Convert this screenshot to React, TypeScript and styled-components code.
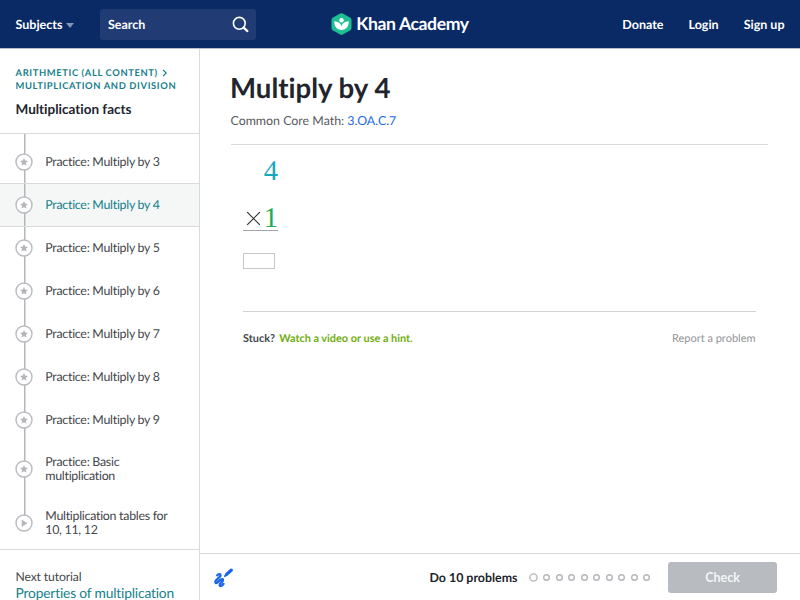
import React from "react";
import styled, { createGlobalStyle, css } from "styled-components";

const GlobalStyle = createGlobalStyle`
  * { box-sizing: border-box; }
  html, body { margin: 0; padding: 0; background: #fff; }
  body {
    font-family: Lato, "Open Sans", sans-serif;
    font-variant-ligatures: none;
    text-rendering: geometricPrecision;
    color: #21242c;
    overflow: hidden;
  }
  a { color: inherit; text-decoration: none; }
  h1, h2, p, ol { margin: 0; padding: 0; }
`;

const Page = styled.div`
  display: flex;
  flex-direction: column;
  width: 800px;
  height: 600px;
  overflow: hidden;
`;

const TopBar = styled.header`
  display: grid;
  grid-template-columns: 1fr auto 1fr;
  align-items: center;
  flex: none;
  height: 49px;
  padding: 0 15.5px 1px 15.5px;
  background: #0a2a66;
  border-bottom: 1px solid #b9bfd0;
  color: #fff;
  font-size: 12.5px;
  font-weight: 700;
`;

const NavLeft = styled.div`
  display: flex;
  align-items: center;
`;

const Subjects = styled.a`
  display: flex;
  align-items: center;
  gap: 4px;
  width: 84.5px;
  padding-top: 1px;
  white-space: nowrap;
  svg { margin-top: 3px; }
`;

const SearchBox = styled.div`
  display: flex;
  align-items: center;
  justify-content: space-between;
  width: 156px;
  height: 31px;
  margin-top: 1px;
  padding: 0 7px 0 8px;
  border-radius: 3px;
  background: #213c74;
`;

const Brand = styled.a`
  display: flex;
  align-items: center;
  gap: 4px;
  font-size: 17.6px;
  letter-spacing: -0.4px;
  line-height: 24px;
  white-space: nowrap;
  margin-top: 1px;
`;

const NavRight = styled.nav`
  display: flex;
  justify-content: flex-end;
  gap: 25px;
  padding-top: 1px;
`;

const Body = styled.div`
  display: flex;
  flex: 1;
  min-height: 0;
`;

const Sidebar = styled.aside`
  flex: none;
  width: 200px;
  border-right: 1px solid #d9dadc;
  overflow: hidden;
`;

const TopicHeader = styled.div`
  height: 85px;
  padding: 19px 0 0 15.5px;
  border-bottom: 1px solid #d9dadc;
`;

const Crumbs = styled.div`
  color: #14808a;
  font-size: 9.4px;
  font-weight: 700;
  line-height: 12.5px;
  letter-spacing: 0.62px;
  white-space: nowrap;
  svg { margin-left: 4px; vertical-align: -1px; }
`;

const TopicTitle = styled.h2`
  margin-top: 7px;
  font-size: 13.5px;
  line-height: 18px;
  font-weight: 700;
`;

const Lessons = styled.ol`
  list-style: none;
  padding-top: 6.5px;
  height: 416px;
  border-bottom: 1px solid #d9dadc;
  background: linear-gradient(#b4b6ba, #b4b6ba) 23.5px 0 / 1.5px 382px no-repeat;
`;

const Lesson = styled.li<{ $active?: boolean; $tall?: boolean }>`
  display: flex;
  align-items: center;
  gap: 12px;
  height: ${(p) => (p.$tall ? 54 : 43)}px;
  padding-left: 15.3px;
  color: #45474b;
  font-size: 12.4px;
  letter-spacing: -0.28px;
  line-height: 14px;
  ${(p) =>
    !p.$tall &&
    css`
      padding-top: 0.6px;
    `}
  ${(p) =>
    p.$active &&
    css`
      height: 44px;
      margin-top: -0.5px;
      margin-bottom: -0.5px;
      color: #14808a;
      background: linear-gradient(#b4b6ba, #b4b6ba) 23.5px 0 / 1.5px 100% no-repeat, #f5f7f7;
      border-top: 1px solid #d9dadc;
      border-bottom: 1px solid #d9dadc;
    `}
  svg { flex: none; }
`;

const NextUp = styled.div`
  padding: 19px 0 0 15.5px;
  color: #45474b;
  font-size: 12.2px;
  letter-spacing: -0.14px;
  line-height: 15px;
  white-space: nowrap;
  a {
    display: block;
    color: #14808a;
    font-size: 13.8px;
    letter-spacing: -0.18px;
    line-height: 18px;
  }
`;

const Main = styled.main`
  display: flex;
  flex-direction: column;
  flex: 1;
  min-width: 0;
`;

const Content = styled.section`
  flex: 1;
  padding: 21px 32px 0 30.5px;
`;

const Title = styled.h1`
  margin-left: -0.5px;
  font-size: 27.6px;
  line-height: 36px;
  font-weight: 700;
`;

const Standard = styled.p`
  margin-top: 6px;
  padding-bottom: 14px;
  border-bottom: 1px solid #d9dadc;
  color: #5a5c60;
  font-size: 12.4px;
  line-height: 18px;
  a { color: #1b66e8; }
`;

const Exercise = styled.div`
  margin: 0 12.5px;
  height: 167px;
  border-bottom: 1px solid #d0d2d4;
`;

const Sum = styled.div`
  display: flex;
  flex-direction: column;
  align-items: flex-end;
  width: 35px;
  padding-top: 11px;
  font-family: "Liberation Serif", serif;
  font-size: 28.5px;
  line-height: 32px;
`;

const Factor = styled.span`
  color: #14a8bd;
`;

const TimesRow = styled.div`
  display: flex;
  align-items: center;
  justify-content: space-between;
  width: 35px;
  height: 32px;
  margin-top: 11px;
  padding-left: 3px;
  padding-top: 8px;
  border-bottom: 1px solid #a2a4a8;
  color: #1fab54;
`;

const Answer = styled.input`
  display: block;
  width: 31.5px;
  height: 16px;
  margin-top: 22px;
  padding: 0 4px;
  border: 1px solid #c4c6ca;
  background: #fff;
  outline: none;
`;

const Help = styled.div`
  display: flex;
  justify-content: space-between;
  margin: 18px 12.5px 0;
  font-size: 11px;
  line-height: 17px;
  color: #45474b;
`;

const Stuck = styled.div`
  font-weight: 700;
  font-size: 10.9px;
  a { margin-left: 1.5px; color: #71ae12; }
`;

const Report = styled.a`
  && { color: #919397; }
`;

const TaskBar = styled.footer`
  display: flex;
  align-items: center;
  flex: none;
  height: 47px;
  padding: 1px 23px 0 13px;
  border-top: 1px solid #d9dadc;
`;

const Goal = styled.span`
  margin-left: auto;
  margin-right: 11px;
  font-size: 12.4px;
  font-weight: 700;
`;

const Dots = styled.div`
  display: flex;
  align-items: center;
  gap: 5.5px;
  margin-right: 18px;
`;

const Dot = styled.svg.attrs({ viewBox: "0 0 10 10" })<{ $current?: boolean }>`
  width: ${(p) => (p.$current ? 9 : 7)}px;
  height: ${(p) => (p.$current ? 9 : 7)}px;
  overflow: visible;
  fill: none;
  stroke: #b4b6ba;
  stroke-width: ${(p) => (p.$current ? 1.5 : 2)};
`;

const CheckButton = styled.button`
  width: 109px;
  height: 31px;
  padding: 0;
  border: 0;
  border-radius: 3px;
  background: #b8bbc0;
  color: #f4f5f6;
  font: 700 12.5px Lato, sans-serif;
`;

const LessonIcon = ({ video }: { video?: boolean }) => (
  <svg width="18" height="18" viewBox="0 0 18 18">
    <circle cx="9" cy="9" r="8" fill="#fff" stroke="#b9bbbf" strokeWidth="1.4" />
    {video ? (
      <path d="M7 6v6.4L12.1 9.2z" fill="#b4b6ba" stroke="#b4b6ba" strokeWidth=".5" strokeLinejoin="round" />
    ) : (
      <path d="M9 5l1.2 2.6 2.8.3-2.1 1.9.6 2.8L9 11.2l-2.5 1.4.6-2.8L5 7.9l2.8-.3z" fill="#b4b6ba" />
    )}
  </svg>
);

const BrandMark = () => (
  <svg width="21" height="22" viewBox="0 0 21 22">
    <path
      d="M9.2.5Q10.5-.1 11.8.5L19.3 4.8Q20.5 5.5 20.5 7v8q0 1.5-1.2 2.2l-7.5 4.3q-1.3.6-2.6 0L1.7 17.2Q.5 16.5.5 15V7Q.5 5.5 1.7 4.8z"
      fill="#1fbf94"
    />
    <circle cx="10.5" cy="7.2" r="2.2" fill="#fff" />
    <path d="M3.3 8.3c4 .2 6.5 2 7.2 5 .7-3 3.2-4.8 7.2-5 .2 5-2.5 8.6-7.2 8.6s-7.4-3.6-7.2-8.6z" fill="#fff" />
  </svg>
);

const lessons = [3, 4, 5, 6, 7, 8, 9];

export default function App() {
  return (
    <Page>
      <GlobalStyle />
      <TopBar>
        <NavLeft>
          <Subjects href="#">
            Subjects
            <svg width="8" height="5" viewBox="0 0 8 5"><path d="M0 0h8L4 5z" fill="#8495b8" /></svg>
          </Subjects>
          <SearchBox>
            Search
            <svg width="17" height="17" viewBox="0 0 17 17" fill="none" stroke="#fff">
              <circle cx="7.3" cy="7.3" r="5.9" strokeWidth="1.6" />
              <path d="M11.6 11.6l3.8 3.5" strokeWidth="2.2" strokeLinecap="round" />
            </svg>
          </SearchBox>
        </NavLeft>
        <Brand href="#"><BrandMark />Khan Academy</Brand>
        <NavRight>
          <a href="#">Donate</a>
          <a href="#">Login</a>
          <a href="#">Sign up</a>
        </NavRight>
      </TopBar>
      <Body>
        <Sidebar>
          <TopicHeader>
            <Crumbs>
              ARITHMETIC (ALL CONTENT)
              <svg width="6" height="8" viewBox="0 0 6 8"><path d="M1.2 1l3 3-3 3" fill="none" stroke="#14808a" strokeWidth="1.1" /></svg>
              <br />
              MULTIPLICATION AND DIVISION
            </Crumbs>
            <TopicTitle>Multiplication facts</TopicTitle>
          </TopicHeader>
          <Lessons>
            {lessons.map((n) => (
              <Lesson key={n} $active={n === 4}>
                <LessonIcon />
                Practice: Multiply by {n}
              </Lesson>
            ))}
            <Lesson $tall><LessonIcon /><span>Practice: Basic<br />multiplication</span></Lesson>
            <Lesson $tall><LessonIcon video /><span>Multiplication tables for<br />10, 11, 12</span></Lesson>
          </Lessons>
          <NextUp>
            Next tutorial
            <a href="#">Properties of multiplication</a>
          </NextUp>
        </Sidebar>
        <Main>
          <Content>
            <Title>Multiply by 4</Title>
            <Standard>Common Core Math: <a href="#">3.OA.C.7</a></Standard>
            <Exercise>
              <Sum>
                <Factor>4</Factor>
                <TimesRow>
                  <svg width="15" height="15" viewBox="0 0 15 15"><path d="M1.2 1.2l12.6 12.6M13.8 1.2L1.2 13.8" stroke="#333" strokeWidth="1.2" /></svg>
                  1
                </TimesRow>
              </Sum>
              <Answer aria-label="Your answer" />
            </Exercise>
            <Help>
              <Stuck>Stuck? <a href="#">Watch a video or use a hint.</a></Stuck>
              <Report href="#">Report a problem</Report>
            </Help>
          </Content>
          <TaskBar>
            <svg width="20" height="20" viewBox="0 0 20 20" fill="none" stroke="#1b66e8" strokeLinecap="round" strokeLinejoin="round">
              <path d="M13.6 6.4l4.6-4.2" strokeWidth="3.3" />
              <path d="M11.8 8.2l.9-.9" strokeWidth="1.8" />
              <path d="M4.2 7.4C5.6 5.4 8.4 6 7.3 8.2L2.8 12.6C1.4 14.8 3 15.8 4.6 14.4L7.400 11.800c2-1.500 3.500-.4 2.100 1.400l-2.400 2.600c-1.200 1.700.1 2.900 1.700 1.800l1.700-1.700" strokeWidth="2.3" />
            </svg>
            <Goal>Do 10 problems</Goal>
            <Dots>
              {Array.from({ length: 10 }, (_, i) => (
                <Dot key={i} $current={i === 0}><circle cx="5" cy="5" r="4" /></Dot>
              ))}
            </Dots>
            <CheckButton>Check</CheckButton>
          </TaskBar>
        </Main>
      </Body>
    </Page>
  );
}
